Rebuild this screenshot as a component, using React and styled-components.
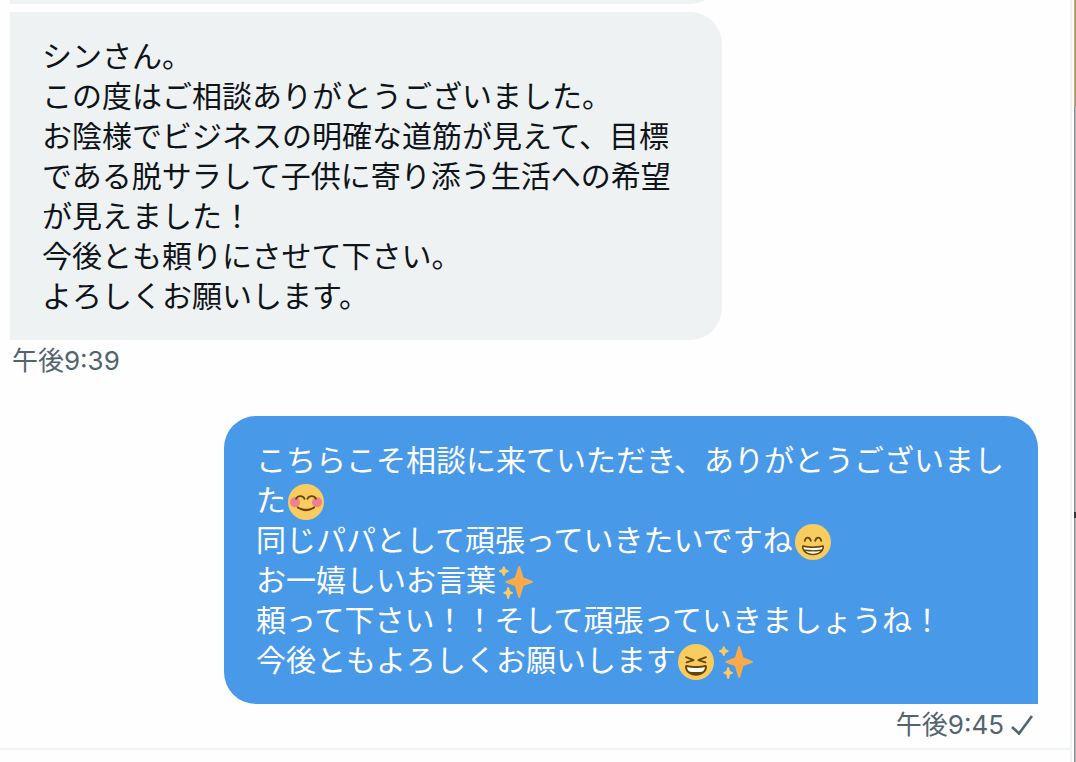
import React from 'react';
import styled, { createGlobalStyle } from 'styled-components';

const GlobalStyle = createGlobalStyle`
  * {
    box-sizing: border-box;
  }

  body {
    margin: 0;
    background: #fefefe;
    font-family: Inter, 'Noto Sans CJK JP', sans-serif;
  }
`;

const Page = styled.div`
  display: flex;
  height: 100vh;
  overflow: hidden;
`;

const Conversation = styled.main`
  flex: 1;
  min-width: 0;
  display: flex;
  flex-direction: column;
  border-right: 2px solid #eff3f4;
`;

const Thread = styled.section`
  flex: 1;
  min-height: 0;
  display: flex;
  flex-direction: column;
  justify-content: flex-end;
  padding: 0 32px 8px 10px;
  overflow: hidden;
`;

const Message = styled.article`
  flex: none;
  display: flex;
  flex-direction: column;
  align-items: ${({ $sent }) => ($sent ? 'flex-end' : 'flex-start')};
  margin-top: ${({ $gap }) => $gap}px;
`;

const Bubble = styled.div`
  width: ${({ $sent }) => ($sent ? 'auto' : '100%')};
  max-width: ${({ $sent }) => ($sent ? 814 : 712)}px;
  min-height: 64px;
  padding: 22px 32px 26px;
  border-radius: ${({ $sent }) => ($sent ? '32px 32px 0 32px' : '0 32px 32px 0')};
  background: ${({ $sent }) => ($sent ? '#4999e9' : '#eef2f3')};
  color: ${({ $sent }) => ($sent ? '#ffffff' : '#0f1419')};
`;

const Text = styled.p`
  margin: 0;
  font-family: 'Noto Sans CJK JP', sans-serif;
  font-size: 30px;
  line-height: 40px;
`;

const Meta = styled.div`
  display: flex;
  align-items: center;
  gap: 4px;
  margin-top: 6px;
  padding: 0 2px;
  color: #536471;
  font-size: 26px;
  line-height: 30px;
`;

const EmojiSvg = styled.svg`
  width: 36px;
  height: 36px;
  margin: 0 2px -2px;
  vertical-align: bottom;
`;

const CheckSvg = styled.svg`
  width: 28px;
  height: 28px;
`;

const Composer = styled.footer`
  flex: none;
  height: 14px;
  border-top: 2px solid #eff3f4;
`;

// Edge of the window behind the conversation
const WindowEdge = styled.aside`
  flex: none;
  width: 4px;
  padding-left: 2px;
  display: flex;
  flex-direction: column;
`;

const EdgePart = styled.div`
  flex: ${({ $grow }) => $grow};
  background: ${({ $color }) => $color};
  border-left: 1px solid ${({ $line }) => $line};
`;

const Emoji = ({ label, children }) => (
  <EmojiSvg viewBox="0 0 36 36" role="img" aria-label={label}>
    {children}
  </EmojiSvg>
);

const Face = () => <circle cx="18" cy="18" r="18" fill="#f9cc5f" />;

const Blush = () => (
  <Emoji label="😊">
    <Face />
    <circle cx="7" cy="18.2" r="5" fill="#f07f8f" />
    <circle cx="29" cy="18.2" r="5" fill="#f07f8f" />
    <path
      fill="none"
      stroke="#664500"
      strokeWidth="1.8"
      strokeLinecap="round"
      d="M8 14.8c1.8-3.6 6.8-3.6 8.6 0M19.4 14.8c1.800-3.600 6.800-3.600 8.600 0"
    />
    <path
      fill="#664500"
      d="M9.200 22.600c-.5.4-.3 1 0 1.300 4.700 4.300 12.900 4.300 17.600 0 .3-.3.5-.9 0-1.300-.4-.3-.9-.2-1.300.1-4.400 2.700-10.600 2.700-15 0-.4-.3-.9-.4-1.300-.1z"
    />
  </Emoji>
);

const Grin = () => (
  <Emoji label="😁">
    <Face />
    <path
      fill="none"
      stroke="#664500"
      strokeWidth="1.8"
      strokeLinecap="round"
      d="M9.8 16.8c.8-4.300 5-4.300 6 0M20.200 16.800c1-4.300 5.200-4.300 6 0"
    />
    <path
      fill="#664500"
      d="M18 22.4c-3.800 0-6.400-.5-9.400-1.100-.9-.2-1.800.4-1.700 1.800.3 4.300 4.300 8.100 11.100 8.100s10.800-3.800 11.100-8.100c.1-1.400-.8-2-1.700-1.800-3 .6-5.600 1.100-9.400 1.100z"
    />
    <path
      fill="#fff"
      d="M8.500 22.900s3 1 9.500 1 9.500-1 9.500-1-.1 1.300-.7 2.400c0 0-3 .9-8.800.9s-8.800-.9-8.800-.9c-.6-1.100-.7-2.400-.7-2.400zM10.600 26.900s2.700.7 7.400.7 7.400-.7 7.400-.7c-1.600 1.800-4.200 2.800-7.400 2.800s-5.800-1-7.400-2.800z"
    />
  </Emoji>
);

const Laugh = () => (
  <Emoji label="😆">
    <Face />
    <path
      fill="none"
      stroke="#664500"
      strokeWidth="1.8"
      strokeLinecap="round"
      strokeLinejoin="round"
      d="M8 13.200l7.600 3-7 2.200M28 13.200l-7.600 3 7 2.200"
    />
    <path
      fill="#664500"
      d="M18 22c-3.600 0-6-.4-9-1-.8-.1-2 0-2 2 0 4.200 4.600 8.800 11 8.800s11-4.600 11-8.800c0-2-1.200-2.100-2-2-3 .6-5.400 1-9 1z"
    />
    <path
      fill="#fff"
      d="M9 23s3 1 9 1 9-1 9-1-.4 3.600-2.400 4.400c-1 .3-3 .6-6.600.6s-5.600-.3-6.600-.6C9.400 26.600 9 23 9 23z"
    />
  </Emoji>
);

const Sparkles = () => (
  <Emoji label="✨">
    <path
      fill="#f9ab4b"
      d="M34.347 16.893l-8.899-3.294-3.323-10.891c-.128-.42-.517-.708-.956-.708-.439 0-.828.288-.956.708l-3.322 10.891-8.9 3.294c-.393.146-.653.519-.653.938 0 .418.26.793.653.938l8.895 3.293 3.324 11.223c.126.424.516.715.959.715.442 0 .833-.291.959-.716l3.324-11.223 8.896-3.293c.391-.144.652-.518.652-.937 0-.418-.261-.792-.653-.938z"
    />
    <path
      fill="#f9cc5f"
      d="M14.347 27.894l-2.314-.856-.9-3.3c-.118-.436-.513-.738-.964-.738-.451 0-.846.302-.965.737l-.9 3.3-2.313.856c-.393.145-.653.52-.653.938 0 .418.26.793.653.938l2.301.852.907 3.622c.112.444.511.756.97.756.459 0 .858-.312.97-.757l.907-3.622 2.301-.852c.393-.144.653-.519.653-.937 0-.418-.26-.793-.653-.937zM10.009 6.231l-2.364-.875-.876-2.365c-.145-.393-.519-.653-.938-.653-.418 0-.792.26-.938.653l-.875 2.365-2.365.875c-.393.146-.653.52-.653.938 0 .418.26.793.653.938l2.365.875.875 2.365c.146.393.52.653.938.653.418 0 .792-.26.938-.653l.875-2.365 2.365-.875c.393-.146.653-.52.653-.938 0-.418-.26-.792-.653-.938z"
    />
  </Emoji>
);

const Check = () => (
  <CheckSvg viewBox="0 0 28 28" role="img" aria-label="既読">
    <path fill="none" stroke="#536471" strokeWidth="2.6" d="M4 16l7 6.500L24 5" />
  </CheckSvg>
);

const App = () => (
  <>
    <GlobalStyle />
    <Page>
      <Conversation>
        <Thread>
          <Message $gap={0}>
            <Bubble />
          </Message>

          <Message $gap={8}>
            <Bubble>
              <Text>シンさん。</Text>
              <Text>この度はご相談ありがとうございました。</Text>
              <Text>
                お陰様でビジネスの明確な道筋が見えて、目標である脱サラして子供に寄り添う生活への希望が見えました！
              </Text>
              <Text>今後とも頼りにさせて下さい。</Text>
              <Text>よろしくお願いします。</Text>
            </Bubble>
            <Meta>
              <time dateTime="21:39">午後9:39</time>
            </Meta>
          </Message>

          <Message $sent $gap={40}>
            <Bubble $sent>
              <Text>
                こちらこそ相談に来ていただき、ありがとうございました
                <Blush />
              </Text>
              <Text>
                同じパパとして頑張っていきたいですね
                <Grin />
              </Text>
              <Text>
                お一嬉しいお言葉
                <Sparkles />
              </Text>
              <Text>頼って下さい！！そして頑張っていきましょうね！</Text>
              <Text>
                今後ともよろしくお願いします
                <Laugh />
                <Sparkles />
              </Text>
            </Bubble>
            <Meta>
              <time dateTime="21:45">午後9:45</time>
              <Check />
            </Meta>
          </Message>
        </Thread>
        <Composer />
      </Conversation>
      <WindowEdge>
        <EdgePart $grow={106} $color="#ac8f4c" $line="#c3ad7a" />
        <EdgePart $grow={406} $color="#b2b2b4" $line="#8e8e90" />
        <EdgePart $grow={6} $color="#34363c" $line="#34363c" />
        <EdgePart $grow={244} $color="#b2b2b4" $line="#8e8e90" />
      </WindowEdge>
    </Page>
  </>
);

export default App;
